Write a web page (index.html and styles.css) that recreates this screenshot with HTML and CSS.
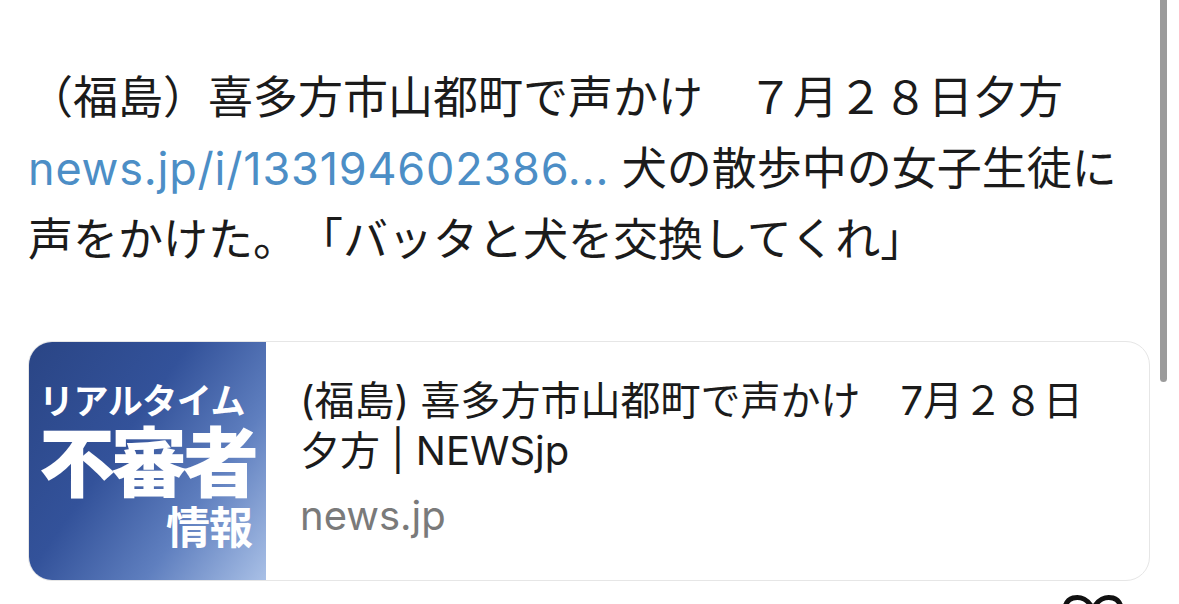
FILE: index.html
```html
<!DOCTYPE html>
<html lang="ja">
<head>
<meta charset="utf-8">
<link rel="stylesheet" href="styles.css">
</head>
<body>
<div class="page">
  <div class="post">
    <p class="body-text">（福島）喜多方市山都町で声かけ　７月２８日夕方<br><span class="link">news.jp/i/133194602386...</span> 犬の散歩中の女子生徒に<br>声をかけた。「バッタと犬を交換してくれ」</p>
    <div class="card">
      <div class="thumb">
        <div class="t1">リアルタイム</div>
        <div class="t2">不審者</div>
        <div class="t3">情報</div>
      </div>
      <div class="card-text">
        <div class="card-title">(福島) 喜多方市山都町で声かけ　7月２８日<br>夕方 | NEWSjp</div>
        <div class="card-domain">news.jp</div>
      </div>
    </div>
  </div>
  <div class="scrollbar"></div>
  <svg class="heart" width="70" height="40" viewBox="0 0 70 40"><path d="M35 16 C31 5 22 2 15 4 C8 6 5 14 7 24 M35 16 C39 5 48 2 55 4 C62 6 65 14 63 24" fill="none" stroke="#111" stroke-width="5" stroke-linecap="round"/></svg>
</div>
</body>
</html>
```

FILE: styles.css
```css
html, body {
  margin: 0;
  padding: 0;
  background: #ffffff;
}
.page {
  position: relative;
  width: 1179px;
  height: 604px;
  overflow: hidden;
  font-family: "Inter", "Noto Sans CJK JP", sans-serif;
  color: #1b1b1b;
}
.post {
  padding: 62px 0 0 28px;
  width: 1122px;
}
.body-text {
  margin: 0;
  font-size: 45px;
  line-height: 71px;
  white-space: nowrap;
  text-spacing-trim: space-all;
}
.link {
  color: #4c8ec6;
  letter-spacing: 0.8px;
}
.card {
  margin-top: 66px;
  height: 238px;
  display: flex;
  border: 1px solid #e6e6e6;
  border-radius: 24px;
  overflow: hidden;
}
.thumb {
  width: 237px;
  flex: none;
  background: linear-gradient(125deg, #2a4585 0%, #33529a 40%, #5f7fbf 70%, #a9c0e6 100%);
  color: #ffffff;
  font-family: "Noto Sans CJK JP", sans-serif;
  font-weight: 700;
  display: flex;
  flex-direction: column;
  padding: 37px 14px 0 10px;
  box-sizing: border-box;
}
.t1 {
  font-size: 35px;
  line-height: 40px;
  letter-spacing: -0.5px;
  white-space: nowrap;
}
.t2 {
  font-size: 76px;
  line-height: 78px;
  font-weight: 900;
  letter-spacing: -4px;
  white-space: nowrap;
}
.t3 {
  font-size: 44px;
  line-height: 56px;
  align-self: flex-end;
  letter-spacing: -1px;
}
.card-text {
  padding: 34px 0 0 34px;
  display: flex;
  flex-direction: column;
}
.card-title {
  font-size: 40px;
  line-height: 50px;
  white-space: nowrap;
}
.card-domain {
  margin-top: 15px;
  font-size: 40px;
  line-height: 50px;
  color: #7a7a7a;
}
.scrollbar {
  position: absolute;
  left: 1160px;
  top: -6px;
  width: 7px;
  height: 388px;
  border-radius: 4px;
  background: #9b9b9b;
}
.heart {
  position: absolute;
  left: 1058px;
  top: 594px;
}
```
